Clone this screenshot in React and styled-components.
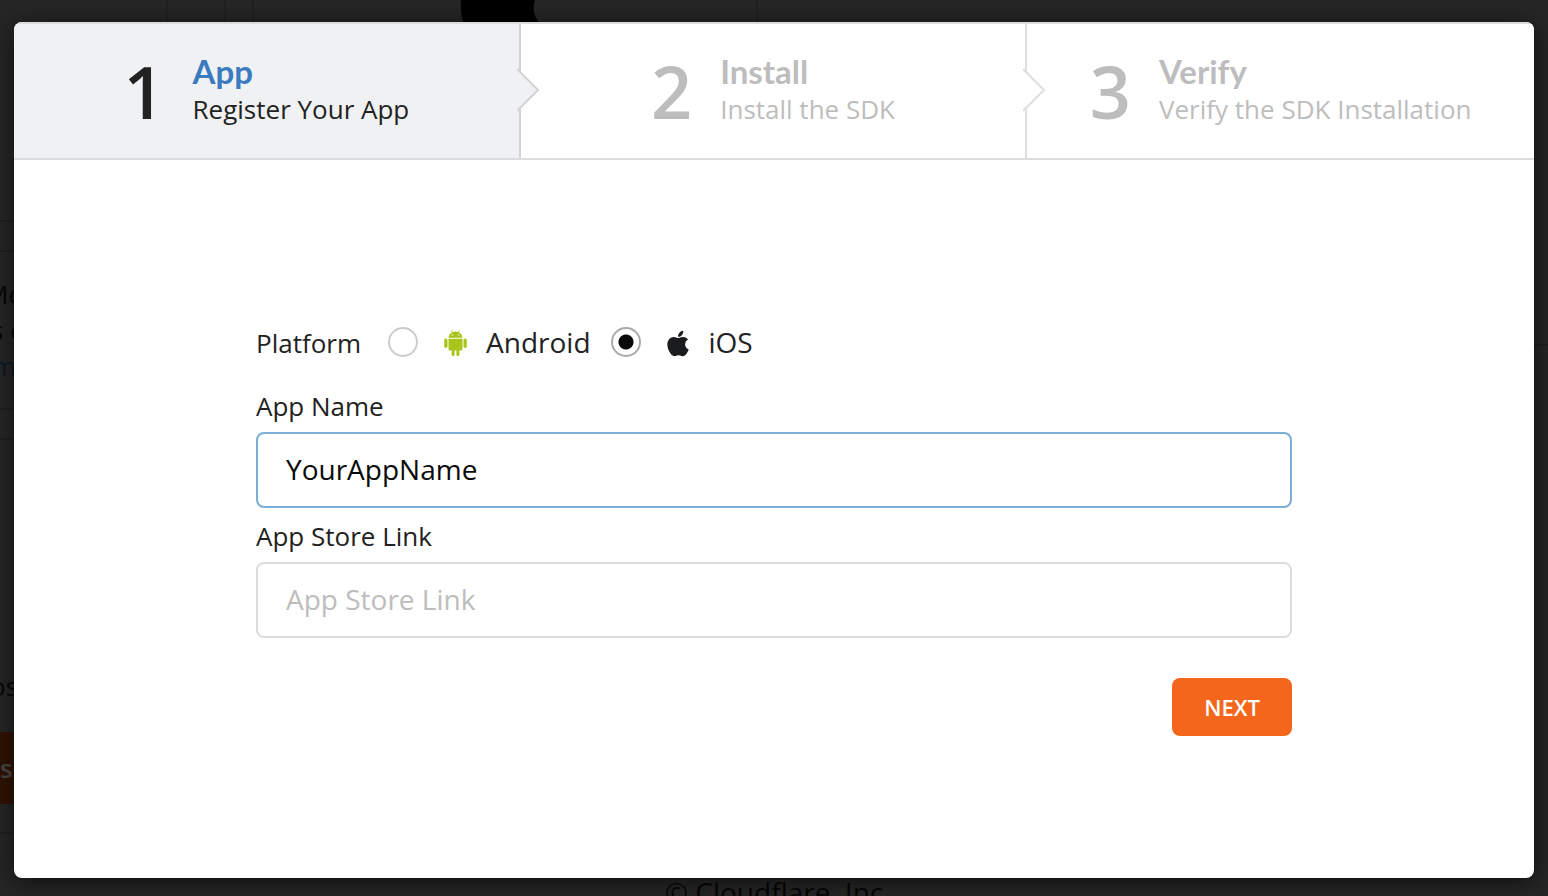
import React, { useState } from "react";
import styled, { createGlobalStyle } from "styled-components";
import { FaApple } from "react-icons/fa";

const GlobalStyle = createGlobalStyle`
  *, *::before, *::after { box-sizing: border-box; }
  body {
    margin: 0;
    background: #262626;
    color: #222;
    font-family: "Open Sans", "Noto Sans", sans-serif;
  }
`;

const Page = styled.div`
  position: relative;
  min-height: 100vh;
  padding: 22px 14px 18px;
  overflow: hidden;
`;

/* Dimmed page that stays behind the dialog */
const Backdrop = styled.div`
  position: absolute;
  inset: 0;
  overflow: hidden;
  display: flex;
  flex-direction: column;
  background: #262626;
  color: #060606;
  font-size: 26px;
  line-height: 36px;
  white-space: nowrap;
`;

const BackdropHeader = styled.div`
  flex: none;
  display: flex;
  height: 30px;
`;

const BackdropBody = styled.div`
  display: flex;
`;

const BackdropMain = styled.div`
  flex: 1;
`;

const BackdropSide = styled.div`
  flex: none;
  width: 280px;
`;

const BackdropColumn = styled.div`
  flex: none;
  width: ${(p) => p.$width}px;
  border-right: 2px solid #202020;
`;

const BackdropLogo = styled.svg`
  display: block;
  margin: 0 auto;
`;

const BackdropGap = styled.div`
  height: ${(p) => p.$height}px;
  border-bottom: 2px solid #1f1f1f;
`;

const BackdropCard = styled.div`
  height: ${(p) => p.$height}px;
  padding-top: ${(p) => p.$top}px;
  border-bottom: 2px solid #1f1f1f;
`;

const BackdropLine = styled.div`
  margin-left: -${(p) => p.$cut}px;
  color: ${(p) => (p.$link ? "#0b1a2a" : "inherit")};
`;

const BackdropAction = styled.div`
  width: 120px;
  margin-top: 28px;
  padding: 18px 0;
  background: #2f1303;
  color: #484848;
  font-weight: 600;
`;

const BackdropFooter = styled.div`
  padding-top: 40px;
  text-align: center;
  font-size: 28px;
`;

const Dialog = styled.main`
  position: relative;
  display: flex;
  flex-direction: column;
  min-height: calc(100vh - 40px);
  overflow: hidden;
  border-radius: 8px;
  background: #fff;
`;

const DialogShadow = styled.div`
  position: relative;
  border-radius: 8px;
  box-shadow: 0 4px 24px rgba(0, 0, 0, 0.6);
`;

const Steps = styled.ol`
  display: grid;
  grid-template-columns: repeat(3, 1fr);
  margin: 0;
  padding: 0;
  list-style: none;
  border-top: 2px solid #dcdcdc;
  border-bottom: 2px solid #dcdcdc;
`;

const StepItem = styled.li`
  position: relative;
  display: flex;
  align-items: center;
  justify-content: center;
  gap: 28px;
  height: 134px;
  border-right: ${(p) => (p.$last ? "0" : "2px")} solid ${(p) => (p.$active ? "#d2d3d4" : "#dedede")};
  background: ${(p) => (p.$active ? "#f0f1f3" : "#fff")};
  color: ${(p) => (p.$active ? "#222" : "#bdbdbd")};
`;

const StepNumber = styled.span`
  font-size: 72px;
  font-weight: 600;
  line-height: 72px;
`;

const StepText = styled.div`
  display: flex;
  flex-direction: column;
  padding-bottom: 2px;
`;

const StepTitle = styled.span`
  color: ${(p) => (p.$active ? "#3a7bbf" : "inherit")};
  font-family: Lato, "Open Sans", sans-serif;
  font-size: 33px;
  font-weight: 700;
  line-height: 38px;
`;

const StepCaption = styled.span`
  font-size: 26px;
  line-height: 38px;
`;

const StepArrow = styled.svg`
  position: absolute;
  z-index: 1;
  top: 44px;
  right: -22px;
`;

const Form = styled.form`
  display: flex;
  flex-direction: column;
  width: 100%;
  max-width: 1084px;
  margin: 0 auto;
  padding: 164px 24px 140px;
`;

const PlatformRow = styled.fieldset`
  display: flex;
  align-items: center;
  height: 36px;
  margin: 0 0 18px;
  padding: 0;
  border: 0;
`;

const LabelText = styled.span`
  font-size: 26px;
  font-weight: 500;
  line-height: 36px;
`;

const Option = styled.label`
  display: flex;
  align-items: center;
  margin-left: ${(p) => (p.$first ? "27px" : "20px")};
  font-size: 28px;
  line-height: 36px;
`;

const Radio = styled.input`
  appearance: none;
  width: 30px;
  height: 30px;
  margin: 0 24px 2px 0;
  border: 2px solid #ccc;
  border-radius: 50%;
  background: #fff;

  &:checked {
    border-color: #aaa;
    background: radial-gradient(circle, #0a0a0a 7px, #fff 8px);
  }
`;

const OptionIcon = styled.span`
  display: flex;
  justify-content: center;
  width: 26px;
  margin-right: 18px;
`;

const OptionName = styled.span`
  padding-bottom: 2px;
`;

const FieldLabel = styled.label`
  padding: 10px 0 8px;
`;

const TextInput = styled.input`
  width: 100%;
  height: 76px;
  padding: 0 28px 2px;
  border: 2px solid #dcdcdc;
  border-radius: 8px;
  outline: none;
  background: #fff;
  color: #0a0a0a;
  font-family: inherit;
  font-size: 28px;

  &::placeholder { color: #bdbdbd; opacity: 1; }
  &:not(:placeholder-shown), &:focus { border-color: #7badd6; }
`;

const NextButton = styled.button`
  align-self: flex-end;
  width: 120px;
  height: 58px;
  margin-top: 40px;
  padding: 0;
  border: 0;
  border-radius: 8px;
  background: #f4661b;
  color: #fff;
  font-family: inherit;
  font-size: 22px;
  font-weight: 600;
  cursor: pointer;
`;

function AndroidIcon() {
  return (
    <svg width="23" height="26" viewBox="0 0 23 26" fill="#a9c51c" aria-hidden="true">
      <path d="M4.5 7.8C4.7 5.2 6.1 3.3 8.3 2.3L7.1.4l.5-.3 1.3 1.9a8.4 8.4 0 0 1 5.2 0L15.4.1l.5.3-1.2 1.9c2.2 1 3.6 2.9 3.8 5.5zM8.4 5.6a.7.7 0 1 0 0-1.4.7.7 0 0 0 0 1.4zm6.2 0a.7.7 0 1 0 0-1.4.7.7 0 0 0 0 1.4z" fillRule="evenodd" />
      <path d="M4.5 8.7h14v10.2a1.5 1.5 0 0 1-1.5 1.5h-1.6v4a1.5 1.5 0 0 1-3 0v-4h-1.8v4a1.5 1.5 0 0 1-3 0v-4H6a1.5 1.5 0 0 1-1.5-1.5z" />
      <rect x="0.2" y="8.5" width="3.3" height="9.4" rx="1.6" />
      <rect x="19.5" y="8.5" width="3.3" height="9.4" rx="1.6" />
    </svg>
  );
}

const STEPS = [
  { title: "App", caption: "Register Your App" },
  { title: "Install", caption: "Install the SDK" },
  { title: "Verify", caption: "Verify the SDK Installation" },
];

function Step({ index, title, caption, active, last }) {
  return (
    <StepItem $active={active} $last={last} aria-current={active ? "step" : undefined}>
      <StepNumber>{index}</StepNumber>
      <StepText>
        <StepTitle $active={active}>{title}</StepTitle>
        <StepCaption>{caption}</StepCaption>
      </StepText>
      {!last && (
        <StepArrow width="24" height="44" viewBox="0 0 24 44" aria-hidden="true">
          <path d="M0 0 L22 22 L0 44 Z" fill={active ? "#f0f1f3" : "#fff"} />
          <path
            d="M0 1 L21 22 L0 43"
            fill="none"
            stroke={active ? "#d2d3d4" : "#dedede"}
            strokeWidth="2"
          />
        </StepArrow>
      )}
    </StepItem>
  );
}

function DimmedPage() {
  return (
    <Backdrop aria-hidden="true">
      <BackdropHeader>
        <BackdropColumn $width={168} />
        <BackdropColumn $width={58} />
        <BackdropColumn $width={28} />
        <BackdropColumn $width={504}>
          <BackdropLogo width="96" height="30" viewBox="0 0 96 30">
            <path d="M4 0h74c-3 8-1 17 5 24v6H9C5 20 3 10 4 0z" fill="#000" />
          </BackdropLogo>
        </BackdropColumn>
      </BackdropHeader>
      <BackdropBody>
        <BackdropMain>
          <BackdropGap $height={192} />
          <BackdropGap $height={30} />
          <BackdropCard $height={158} $top={24}>
            <BackdropLine $cut={15}>Mo</BackdropLine>
            <BackdropLine $cut={9}>s o</BackdropLine>
            <BackdropLine $cut={8} $link>m</BackdropLine>
          </BackdropCard>
          <BackdropGap $height={30} />
          <BackdropCard $height={394} $top={228}>
            <BackdropLine $cut={10}>os</BackdropLine>
            <BackdropAction>se</BackdropAction>
          </BackdropCard>
        </BackdropMain>
        <BackdropSide>
          <BackdropGap $height={316} />
        </BackdropSide>
      </BackdropBody>
      <BackdropFooter>© Cloudflare, Inc</BackdropFooter>
    </Backdrop>
  );
}

export default function App() {
  const [platform, setPlatform] = useState("ios");
  const [name, setName] = useState("YourAppName");
  const [link, setLink] = useState("");

  return (
    <>
      <GlobalStyle />
      <Page>
        <DimmedPage />
        <DialogShadow>
          <Dialog>
            <Steps>
              {STEPS.map((step, i) => (
                <Step
                  key={step.title}
                  index={i + 1}
                  {...step}
                  active={i === 0}
                  last={i === STEPS.length - 1}
                />
              ))}
            </Steps>
            <Form onSubmit={(e) => e.preventDefault()}>
              <PlatformRow role="radiogroup" aria-labelledby="platform-label">
                <LabelText id="platform-label">Platform</LabelText>
                <Option $first>
                  <Radio
                    type="radio"
                    name="platform"
                    checked={platform === "android"}
                    onChange={() => setPlatform("android")}
                  />
                  <OptionIcon><AndroidIcon /></OptionIcon>
                  <OptionName>Android</OptionName>
                </Option>
                <Option>
                  <Radio
                    type="radio"
                    name="platform"
                    checked={platform === "ios"}
                    onChange={() => setPlatform("ios")}
                  />
                  <OptionIcon><FaApple size={29} color="#1b1c1e" aria-hidden="true" /></OptionIcon>
                  <OptionName>iOS</OptionName>
                </Option>
              </PlatformRow>
              <FieldLabel htmlFor="app-name"><LabelText>App Name</LabelText></FieldLabel>
              <TextInput
                id="app-name"
                type="text"
                placeholder="App Name"
                value={name}
                onChange={(e) => setName(e.target.value)}
              />
              <FieldLabel htmlFor="store-link"><LabelText>App Store Link</LabelText></FieldLabel>
              <TextInput
                id="store-link"
                type="text"
                placeholder="App Store Link"
                value={link}
                onChange={(e) => setLink(e.target.value)}
              />
              <NextButton type="submit">NEXT</NextButton>
            </Form>
          </Dialog>
        </DialogShadow>
      </Page>
    </>
  );
}
